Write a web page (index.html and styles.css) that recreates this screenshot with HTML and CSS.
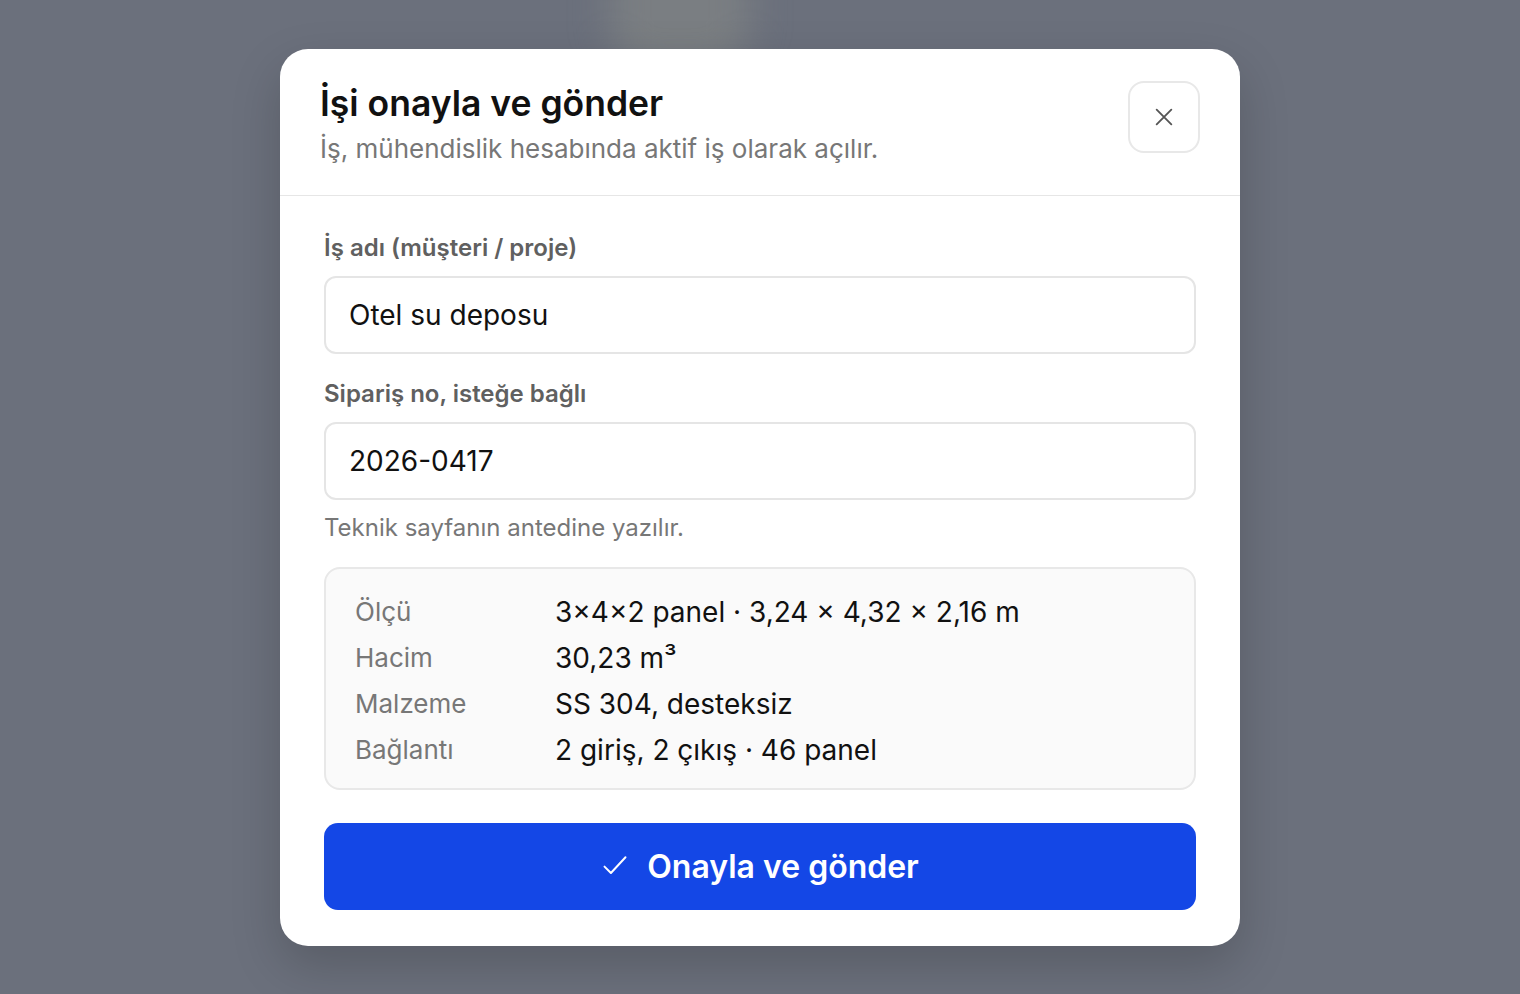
FILE: index.html
```html
<!DOCTYPE html>
<html lang="tr">
<head>
<meta charset="utf-8">
<title>İşi onayla ve gönder</title>
<link rel="stylesheet" href="styles.css">
</head>
<body>
<div class="backdrop">
  <div class="blur-shape"></div>
</div>
<div class="overlay">
  <div class="modal" role="dialog" aria-labelledby="modal-title">
    <div class="modal-header">
      <div class="heading">
        <h2 id="modal-title" class="title">İşi onayla ve gönder</h2>
        <p class="subtitle">İş, mühendislik hesabında aktif iş olarak açılır.</p>
      </div>
      <button class="close-btn" aria-label="Kapat">
        <svg width="22" height="22" viewBox="0 0 24 24" fill="none" stroke="#555" stroke-width="2" stroke-linecap="round"><path d="M4 4l16 16M20 4L4 20"/></svg>
      </button>
    </div>
    <div class="modal-body">
      <label class="field-label">İş adı (müşteri / proje)</label>
      <div class="input">Otel su deposu</div>
      <label class="field-label second">Sipariş no, isteğe bağlı</label>
      <div class="input">2026-0417</div>
      <p class="hint">Teknik sayfanın antedine yazılır.</p>
      <div class="summary">
        <div class="k">Ölçü</div><div class="v">3×4×2 panel · 3,24 × 4,32 × 2,16 m</div>
        <div class="k">Hacim</div><div class="v">30,23 m³</div>
        <div class="k">Malzeme</div><div class="v">SS 304, desteksiz</div>
        <div class="k">Bağlantı</div><div class="v">2 giriş, 2 çıkış · 46 panel</div>
      </div>
      <button class="submit">
        <svg width="28" height="28" viewBox="0 0 24 24" fill="none" stroke="#fff" stroke-width="1.7" stroke-linecap="round" stroke-linejoin="round"><path d="M3 12.5l5.5 5.5L21 4.5"/></svg>
        <span>Onayla ve gönder</span>
      </button>
    </div>
  </div>
</div>
</body>
</html>
```
FILE: styles.css
```css
* { box-sizing: border-box; }
html, body { margin: 0; padding: 0; }
body {
  width: 1520px;
  height: 994px;
  overflow: hidden;
  background: #6b707c;
  font-family: Inter, "Noto Sans", sans-serif;
  position: relative;
}
.backdrop {
  position: absolute;
  inset: 0;
  overflow: hidden;
}
.blur-shape {
  position: absolute;
  left: 610px;
  top: -60px;
  width: 140px;
  height: 130px;
  background: #7a7e82;
  filter: blur(18px);
  border-radius: 40px;
}
.overlay {
  position: relative;
  width: 100%;
  height: 100%;
  display: flex;
  align-items: center;
  justify-content: center;
}
.modal {
  width: 960px;
  height: 897px;
  background: #fff;
  border-radius: 28px;
  box-shadow: 0 20px 50px rgba(0,0,0,0.18);
  display: flex;
  flex-direction: column;
}
.modal-header {
  display: flex;
  justify-content: space-between;
  align-items: flex-start;
  padding: 33px 40px 29px 40px;
  border-bottom: 1px solid #e6e6e6;
}
.title {
  margin: 0;
  font-size: 35.5px;
  line-height: 44px;
  font-weight: 600;
  color: #111;
}
.subtitle {
  margin: 6px 0 0 0;
  font-size: 26px;
  line-height: 34px;
  color: #777;
}
.close-btn {
  width: 72px;
  height: 72px;
  margin-top: -1px;
  border: 2px solid #e8e8e8;
  border-radius: 16px;
  background: #fff;
  display: flex;
  align-items: center;
  justify-content: center;
  padding: 0;
}
.modal-body {
  padding: 36px 44px 36px 44px;
  display: flex;
  flex-direction: column;
}
.field-label {
  font-size: 24px;
  line-height: 32px;
  font-weight: 600;
  color: #606060;
  margin-bottom: 12px;
}
.field-label.second { margin-top: 24px; }
.input {
  height: 78px;
  border: 2px solid #e5e5e5;
  border-radius: 12px;
  padding: 0 23px;
  display: flex;
  align-items: center;
  font-size: 28px;
  color: #111;
}
.hint {
  margin: 12px 0 0 0;
  font-size: 24px;
  line-height: 32px;
  color: #777;
}
.summary {
  margin-top: 23px;
  height: 223px;
  background: #fafafa;
  border: 2px solid #e8e8e8;
  border-radius: 16px;
  padding: 20px 29px 15px 29px;
  display: grid;
  grid-template-columns: 200px 1fr;
  grid-auto-rows: 46px;
  align-items: center;
}
.summary .k { color: #777; font-size: 26px; }
.summary .v { color: #111; font-size: 28px; }
.submit {
  margin-top: 33px;
  height: 87px;
  border: none;
  border-radius: 14px;
  background: #1447e6;
  color: #fff;
  font-family: Inter, "Noto Sans", sans-serif;
  font-size: 32px;
  font-weight: 600;
  display: flex;
  align-items: center;
  justify-content: center;
  gap: 18px;
}
```
